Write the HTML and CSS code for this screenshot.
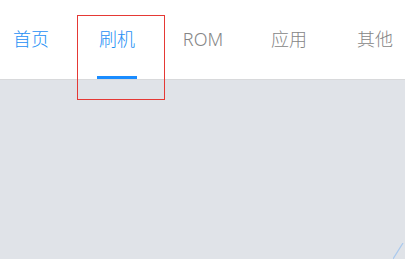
FILE: index.html
```html
<!DOCTYPE html>
<html lang="zh">
<head>
<meta charset="utf-8">
<title>Tabs</title>
<link rel="stylesheet" href="styles.css">
</head>
<body>
<div class="page">
  <header class="tabs">
    <nav class="track">
      <div class="tab blue"><span class="label">首页</span></div>
      <div class="tab blue active"><span class="label">刷机</span><span class="bar"></span></div>
      <div class="tab"><span class="label">ROM</span></div>
      <div class="tab"><span class="label">应用</span></div>
      <div class="tab"><span class="label">其他</span></div>
    </nav>
  </header>
  <main class="content"></main>
  <div class="highlight"></div>
  <svg class="deco" width="12" height="16" viewBox="0 0 12 16"><line x1="0" y1="16" x2="10" y2="0" stroke="#a9c9ee" stroke-width="1.2"/></svg>
</div>
</body>
</html>
```
FILE: styles.css
```css
html, body {
  margin: 0;
  padding: 0;
}
body {
  width: 405px;
  height: 259px;
  overflow: hidden;
  font-family: "Noto Sans", "Noto Sans CJK SC", sans-serif;
  background: #fff;
}
.page {
  position: relative;
  display: flex;
  flex-direction: column;
  height: 259px;
}
.tabs {
  height: 79px;
  border-bottom: 1px solid #d8d9db;
  background: #fff;
  overflow: hidden;
}
.track {
  display: flex;
  height: 79px;
  margin-left: -12px;
}
.tab {
  flex: 0 0 86px;
  display: flex;
  flex-direction: column;
  align-items: center;
  padding-top: 26px;
  box-sizing: border-box;
  color: #858585;
  font-weight: 300;
}
.label {
  font-size: 18px;
  line-height: 27px;
}
.tab.blue {
  color: #1d8ff5;
}
.bar {
  margin-top: auto;
  width: 40px;
  height: 3px;
  background: #1a8cff;
}
.content {
  flex: 1;
  background: #e0e3e8;
}
.highlight {
  position: absolute;
  left: 77px;
  top: 15px;
  width: 86px;
  height: 83px;
  border: 1px solid #e53935;
}
.deco {
  position: absolute;
  right: 0;
  bottom: 0;
}
```
